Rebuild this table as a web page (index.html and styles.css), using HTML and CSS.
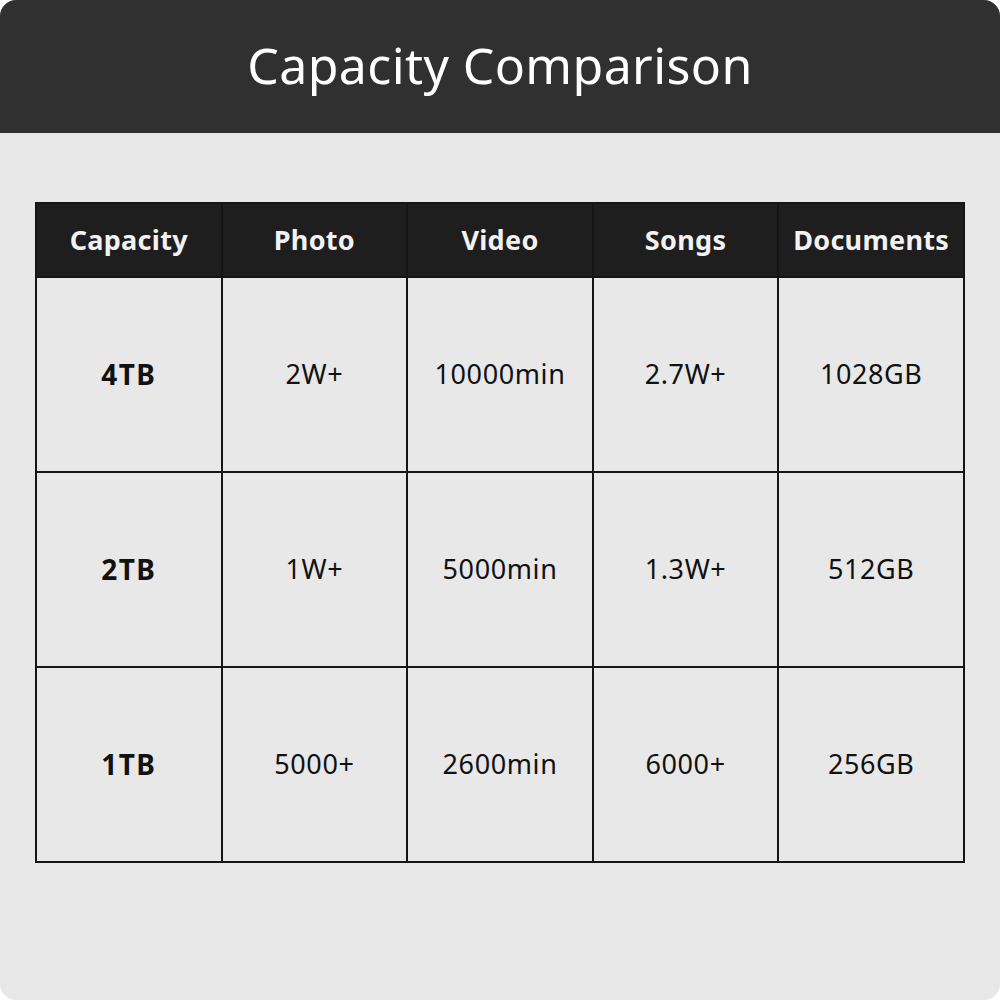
FILE: index.html
```html
<!DOCTYPE html>
<html>
<head>
<meta charset="utf-8">
<link rel="stylesheet" href="styles.css">
</head>
<body>
<div class="card">
  <div class="banner"><h1 class="title">Capacity Comparison</h1></div>
  <div class="content">
    <table class="cmp">
      <thead>
        <tr><th>Capacity</th><th>Photo</th><th>Video</th><th>Songs</th><th>Documents</th></tr>
      </thead>
      <tbody>
        <tr><td class="cap">4TB</td><td>2W+</td><td>10000min</td><td>2.7W+</td><td>1028GB</td></tr>
        <tr><td class="cap">2TB</td><td>1W+</td><td>5000min</td><td>1.3W+</td><td>512GB</td></tr>
        <tr><td class="cap">1TB</td><td>5000+</td><td>2600min</td><td>6000+</td><td>256GB</td></tr>
      </tbody>
    </table>
  </div>
</div>
</body>
</html>
```
FILE: styles.css
```css
html, body {
  margin: 0;
  padding: 0;
  background: #ffffff;
}
.card {
  width: 1000px;
  height: 1000px;
  background: #e8e8e8;
  border-radius: 16px;
  overflow: hidden;
  font-family: "Noto Sans", "Open Sans", sans-serif;
}
.banner {
  height: 133px;
  background: #303030;
  display: flex;
  align-items: center;
  justify-content: center;
}
.title {
  margin: 0;
  color: #ffffff;
  font-weight: 400;
  font-size: 50px;
  letter-spacing: 0.4px;
  line-height: 1;
  padding-bottom: 4px;
}
.content {
  padding: 69px 35px 0 35px;
}
.cmp {
  width: 930px;
  border-collapse: collapse;
  table-layout: fixed;
  border: 2px solid #111;
}
.cmp th, .cmp td {
  border: 2px solid #151515;
  text-align: center;
  vertical-align: middle;
  padding: 0 0 2px 0;
}
.cmp th {
  height: 70px;
  background: #1e1e1e;
  color: #f2f2f2;
  font-weight: 700;
  font-size: 27px;
  letter-spacing: 0.3px;
}
.cmp td {
  height: 191px;
  color: #111;
  font-size: 27px;
  letter-spacing: 0.6px;
}
.cmp td.cap {
  font-weight: 700;
  font-size: 28px;
  letter-spacing: 1.5px;
}
```
